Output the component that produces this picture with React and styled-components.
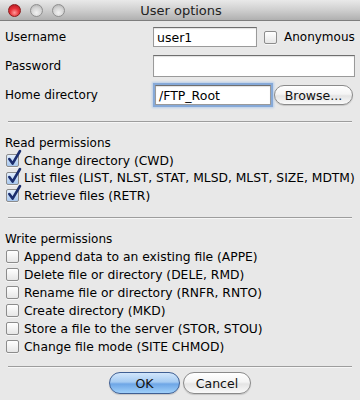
import React from 'react';
import styled, { createGlobalStyle } from 'styled-components';

const Global = createGlobalStyle`
  html, body {
    margin: 0;
    padding: 0;
    background: #e8e8e8;
  }
  body {
    font-family: "DejaVu Sans", "Liberation Sans", sans-serif;
    font-size: 12px;
    color: #000;
  }
`;

const Window = styled.div`
  width: 360px;
  height: 400px;
  background: #e8e8e8;
  display: flex;
  flex-direction: column;
  overflow: hidden;
`;

const TitleBar = styled.div`
  height: 21px;
  box-sizing: border-box;
  background: linear-gradient(#e9e9e9, #cfcfcf 50%, #b0b0b0);
  border-bottom: 1px solid #7e7e7e;
  display: flex;
  align-items: center;
  position: relative;
  padding-left: 8px;
  gap: 9px;
`;

const Light = styled.span`
  width: 13px;
  height: 13px;
  border-radius: 50%;
  box-sizing: border-box;
  border: 1px solid ${(p) => (p.$red ? '#8c1a1a' : '#8f8f8f')};
  background: ${(p) =>
    p.$red
      ? 'radial-gradient(circle at 50% 70%, #ff9a9a 0%, #e8333a 45%, #a8141c 100%)'
      : 'radial-gradient(circle at 50% 70%, #f2f2f2 0%, #d2d2d2 55%, #a9a9a9 100%)'};
`;

const Title = styled.div`
  position: absolute;
  inset: 0;
  display: flex;
  align-items: center;
  justify-content: center;
  font-size: 13px;
  color: #222;
  padding-left: 2px;
  pointer-events: none;
`;

const Body = styled.div`
  padding: 6px 8px 0 5px;
  display: flex;
  flex-direction: column;
`;

const FormGrid = styled.div`
  display: grid;
  grid-template-columns: 148px 1fr;
  row-gap: 8px;
  align-items: center;
`;

const Label = styled.div``;

const FieldRow = styled.div`
  display: flex;
  align-items: center;
  gap: ${(p) => p.$gap || 0}px;
`;

const Input = styled.div`
  box-sizing: border-box;
  width: ${(p) => (p.$width ? `${p.$width}px` : '100%')};
  height: ${(p) => p.$height || 21}px;
  background: #fff;
  border: 1px solid #9a9a9a;
  border-top-color: #6f6f6f;
  box-shadow: inset 0 1px 1px rgba(0, 0, 0, 0.12)
    ${(p) => (p.$focus ? ', 0 0 0 2px #86a9d8, 0 0 2px 3px #b7cde9' : '')};
  display: flex;
  align-items: center;
  padding-left: 3px;
  font-size: 12.5px;
  margin: ${(p) => (p.$focus ? '0 3px 0 2px' : '0')};
`;

const PillButton = styled.div`
  box-sizing: border-box;
  height: ${(p) => p.$height || 20}px;
  width: ${(p) => p.$width}px;
  border-radius: 11px;
  border: 1px solid ${(p) => (p.$primary ? '#3f5f93' : '#8a8a8a')};
  background: ${(p) =>
    p.$primary
      ? 'linear-gradient(#d2e6fb 0%, #a5cbf2 45%, #6ea6e6 55%, #9fd0fa 100%)'
      : 'linear-gradient(#ffffff 0%, #f4f4f4 45%, #e4e4e4 55%, #fafafa 100%)'};
  box-shadow: 0 1px 1px rgba(0, 0, 0, 0.15);
  display: flex;
  align-items: center;
  justify-content: center;
  font-size: 12.5px;
  color: #111;
`;

const Separator = styled.div`
  height: 1px;
  background: #9d9d9d;
  border-bottom: 1px solid #f6f6f6;
  margin: ${(p) => p.$margin || '0'};
  margin-left: 3px;
`;

const SectionTitle = styled.div`
  margin: ${(p) => p.$margin || '0'};
`;

const CheckList = styled.div`
  display: flex;
  flex-direction: column;
  gap: ${(p) => p.$gap}px;
  margin-top: 4px;
`;

const CheckRow = styled.div`
  display: flex;
  align-items: center;
  gap: 5px;
  padding-left: 1px;
  height: 13px;
  white-space: nowrap;
  font-size: 12.3px;
`;

const BoxWrap = styled.span`
  position: relative;
  width: 13px;
  height: 13px;
  flex: none;
  box-sizing: border-box;
  border: 1px solid #8c8c8c;
  border-radius: 2px;
  background: ${(p) =>
    p.$checked
      ? 'linear-gradient(#e2eefc, #a9c8ee)'
      : 'linear-gradient(#ffffff, #e6e6e6)'};
  box-shadow: 0 1px 0 rgba(255, 255, 255, 0.6);
`;

const Tick = styled.svg`
  position: absolute;
  left: 1px;
  top: -5px;
  overflow: visible;
`;

const Footer = styled.div`
  display: flex;
  justify-content: center;
  gap: 3px;
  margin-top: 4px;
  padding-left: 3px;
`;

function CheckBox({ checked }) {
  return (
    <BoxWrap $checked={checked}>
      {checked && (
        <Tick width="13" height="16" viewBox="0 0 13 16">
          <path
            d="M1.3 9 L4.6 13.6 L12 1"
            fill="none"
            stroke="#1b2e6e"
            strokeWidth="2.6"
            strokeLinecap="round"
            strokeLinejoin="round"
          />
        </Tick>
      )}
    </BoxWrap>
  );
}

const readPerms = [
  'Change directory (CWD)',
  'List files (LIST, NLST, STAT, MLSD, MLST, SIZE, MDTM)',
  'Retrieve files (RETR)',
];

const writePerms = [
  'Append data to an existing file (APPE)',
  'Delete file or directory (DELE, RMD)',
  'Rename file or directory (RNFR, RNTO)',
  'Create directory (MKD)',
  'Store a file to the server (STOR, STOU)',
  'Change file mode (SITE CHMOD)',
];

export default function App() {
  return (
    <Window>
      <Global />
      <TitleBar>
        <Light $red />
        <Light />
        <Light />
        <Title>User options</Title>
      </TitleBar>
      <Body>
        <FormGrid>
          <Label>Username</Label>
          <FieldRow $gap={7}>
            <Input $width={104} $height={20}>user1</Input>
            <CheckBox />
            <span>Anonymous</span>
          </FieldRow>
          <Label>Password</Label>
          <Input $height={22} />
          <Label>Home directory</Label>
          <FieldRow>
            <Input $width={116} $height={20} $focus>
              /FTP_Root
            </Input>
            <PillButton $width={79} $height={20}>
              Browse...
            </PillButton>
          </FieldRow>
        </FormGrid>
        <Separator $margin="16px 0 0 0" />
        <SectionTitle $margin="13px 0 0 0">Read permissions</SectionTitle>
        <CheckList $gap={4.5}>
          {readPerms.map((t) => (
            <CheckRow key={t}>
              <CheckBox checked />
              <span>{t}</span>
            </CheckRow>
          ))}
        </CheckList>
        <Separator $margin="15px 0 0 0" />
        <SectionTitle $margin="13px 0 0 0">Write permissions</SectionTitle>
        <CheckList $gap={5}>
          {writePerms.map((t) => (
            <CheckRow key={t}>
              <CheckBox />
              <span>{t}</span>
            </CheckRow>
          ))}
        </CheckList>
        <Separator $margin="13px 0 0 0" />
        <Footer>
          <PillButton $primary $width={71} $height={22}>
            OK
          </PillButton>
          <PillButton $width={68} $height={22}>
            Cancel
          </PillButton>
        </Footer>
      </Body>
    </Window>
  );
}
